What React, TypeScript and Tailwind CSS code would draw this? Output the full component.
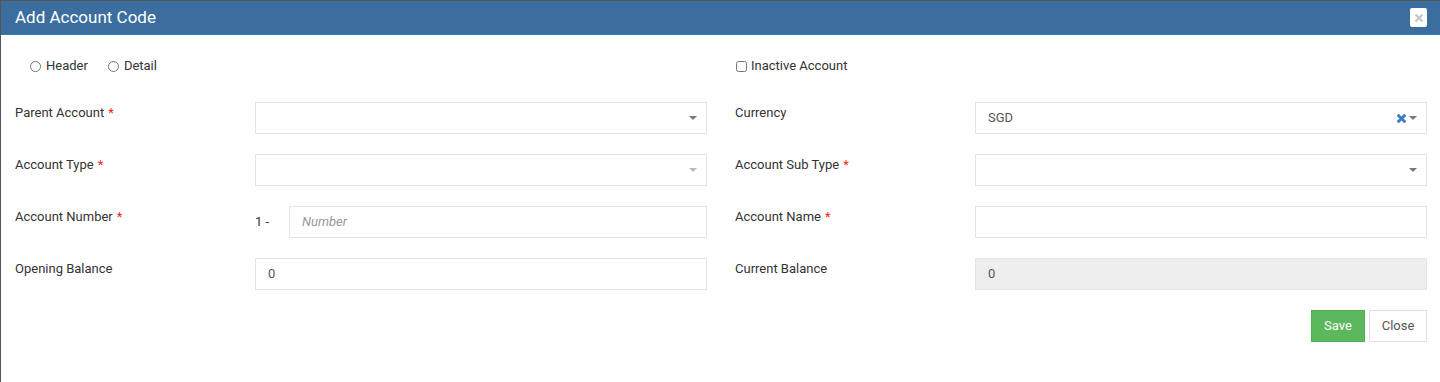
import React from "react";

const Caret = ({ light }: { light?: boolean }) => (
  <span
    className={`inline-block h-0 w-0 border-x-[4px] border-t-[4px] border-x-transparent ${
      light ? "border-t-[#bbb]" : "border-t-[#777]"
    }`}
  />
);

const Label = ({ text, required, right }: { text: string; required?: boolean; right?: boolean }) => (
  <div className={`pt-[2px] text-[13px] leading-[18px] text-[#333] ${right ? "pl-[28px]" : ""}`}>
    {text}
    {required && <span className="ml-[4px] text-[#ff1a1a]">*</span>}
  </div>
);

const SelectBox = ({ value, clear, light }: { value?: string; clear?: boolean; light?: boolean }) => (
  <div className="flex h-[32px] items-center border border-[#e5e5e5] bg-white pl-[12px] pr-[9px]">
    <span className="flex-1 text-[13px] text-[#555]">{value}</span>
    {clear && (
      <svg width="11" height="11" viewBox="0 0 10 10" className="mr-[2px]">
        <path d="M1.5 1.5 L8.5 8.5 M8.5 1.5 L1.5 8.5" stroke="#3a7cc2" strokeWidth="2.6" />
      </svg>
    )}
    <Caret light={light} />
  </div>
);

const TextBox = ({ value, placeholder, disabled }: { value?: string; placeholder?: string; disabled?: boolean }) => (
  <div
    className={`flex h-[32px] items-center border border-[#e5e5e5] px-[12px] text-[13px] ${
      disabled ? "bg-[#eeeeee]" : "bg-white"
    }`}
  >
    {value ? (
      <span className="text-[#555]">{value}</span>
    ) : (
      <span className="italic text-[#999]">{placeholder}</span>
    )}
  </div>
);

const App = () => {
  return (
    <div className="h-[382px] w-[1440px] bg-[#555] pt-px pl-px font-['Roboto',sans-serif]">
      <div className="h-full bg-white">
        <div className="flex h-[34px] items-center justify-between border-b border-[#1d8ab3] bg-[#3b6e9e] pl-[14px] pr-[13px]">
          <h4 className="text-[17px] text-white">Add Account Code</h4>
          <button className="flex h-[19px] w-[17px] items-center justify-center rounded-[2px] bg-white">
            <svg width="10" height="10" viewBox="0 0 10 10">
              <path d="M1.5 1.5 L8.5 8.5 M8.5 1.5 L1.5 8.5" stroke="#c8c8c8" strokeWidth="2.4" />
            </svg>
          </button>
        </div>

        <div className="grid grid-cols-[240px_452px_268px_452px] gap-y-[20px] pl-[14px] pt-[21px]">
          <div className="col-span-2 flex h-[20px] items-center gap-[20px] pl-[15px] text-[13px] text-[#333]">
            <label className="flex items-center gap-[5px]">
              <input type="radio" name="kind" className="m-0 h-[11px] w-[11px]" />
              Header
            </label>
            <label className="flex items-center gap-[5px]">
              <input type="radio" name="kind" className="m-0 h-[11px] w-[11px]" />
              Detail
            </label>
          </div>
          <div className="col-span-2 flex h-[20px] items-center pl-[29px] text-[13px] text-[#333]">
            <label className="flex items-center gap-[4px]">
              <input type="checkbox" className="m-0 h-[11px] w-[11px]" />
              Inactive Account
            </label>
          </div>

          <div className="mt-[6px]">
            <Label text="Parent Account" required />
          </div>
          <div className="mt-[6px]">
            <SelectBox />
          </div>
          <div className="mt-[6px]">
            <Label text="Currency" right />
          </div>
          <div className="mt-[6px]">
            <SelectBox value="SGD" clear />
          </div>

          <Label text="Account Type" required />
          <SelectBox light />
          <Label text="Account Sub Type" required right />
          <SelectBox />

          <Label text="Account Number" required />
          <div className="flex items-center">
            <span className="w-[34px] text-[13px] text-[#333]">1 -</span>
            <div className="flex-1">
              <TextBox placeholder="Number" />
            </div>
          </div>
          <Label text="Account Name" required right />
          <TextBox />

          <Label text="Opening Balance" />
          <TextBox value="0" />
          <Label text="Current Balance" right />
          <TextBox value="0" disabled />
        </div>

        <div className="flex justify-end gap-[4px] pr-[13px] pt-[20px]">
          <button className="h-[32px] w-[54px] border border-[#4cae4c] bg-[#5cb85c] text-[13px] text-white">
            Save
          </button>
          <button className="h-[32px] w-[58px] border border-[#e0e0e0] bg-white text-[13px] text-[#555]">
            Close
          </button>
        </div>
      </div>
    </div>
  );
};

export default App;
